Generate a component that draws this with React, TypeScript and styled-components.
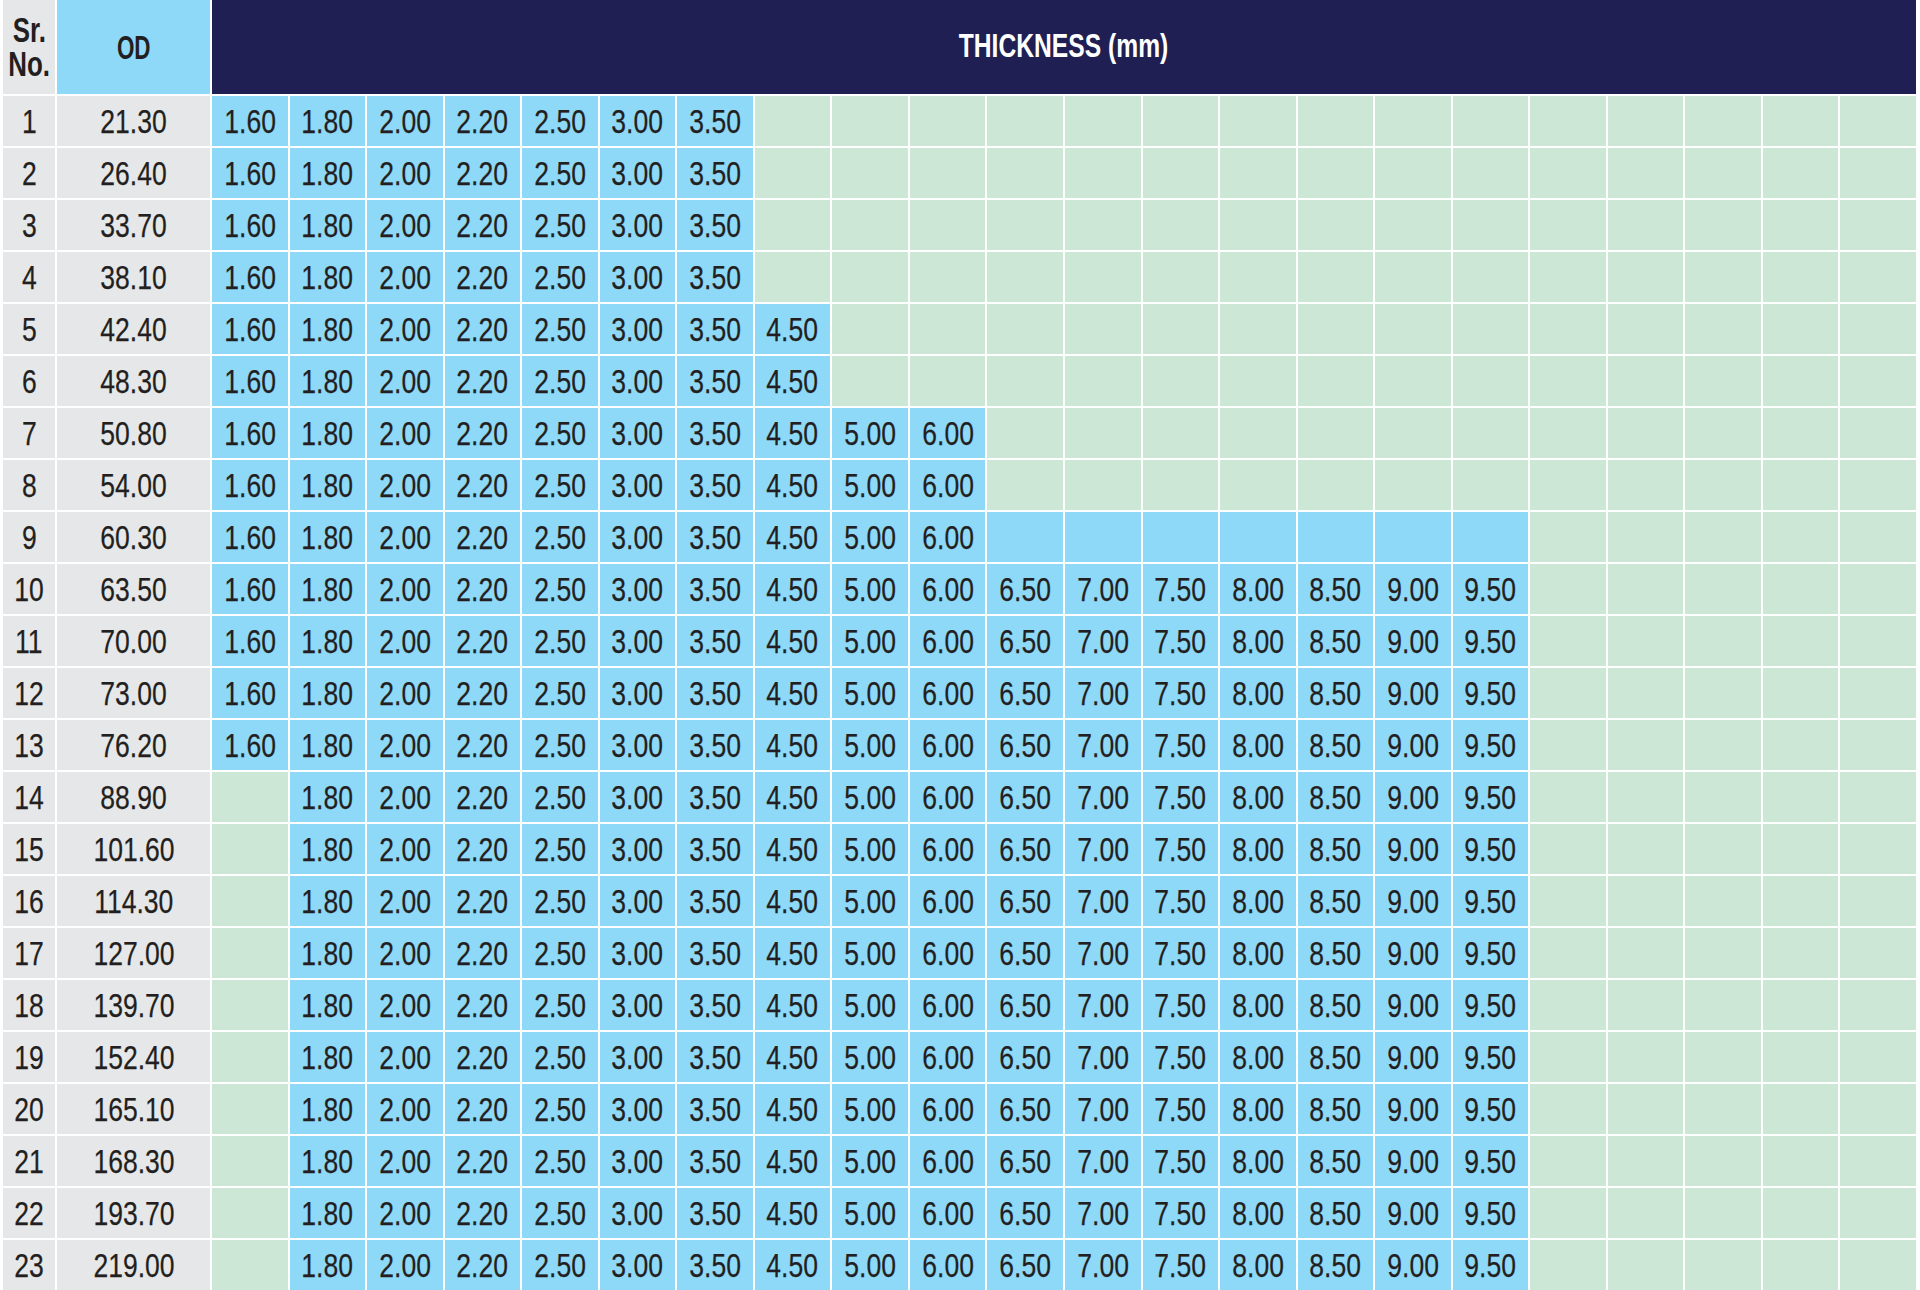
import React from "react";
import styled, { createGlobalStyle } from "styled-components";

const GlobalStyle = createGlobalStyle`
  html, body {
    margin: 0;
    padding: 0;
    background: #ffffff;
  }
  body {
    font-family: "Liberation Sans", Arial, sans-serif;
  }
`;

const FONT = `"Liberation Sans", Arial, sans-serif`;

const Table = styled.div`
  display: grid;
  grid-template-columns: 52px 153px repeat(22, 1fr);
  grid-template-rows: 94px repeat(23, 50px);
  gap: 2px;
  width: 1920px;
  box-sizing: border-box;
  padding: 0 4px 0 3px;
  background: #ffffff;
  font-family: ${FONT};
  color: #231f20;
`;

const HeadCell = styled.div<{ $tone: "grey" | "blue" | "navy"; $span?: number }>`
  display: flex;
  flex-direction: column;
  align-items: center;
  justify-content: center;
  text-align: center;
  font-weight: 700;
  grid-column: ${(p) => (p.$span ? `span ${p.$span}` : "auto")};
  background: ${(p) =>
    p.$tone === "grey" ? "#e6e7e8" : p.$tone === "blue" ? "#8ed8f8" : "#1f1f53"};
  color: ${(p) => (p.$tone === "navy" ? "#ffffff" : "#231f20")};
`;

/* condensed look: the reference uses a condensed grotesque */
const Condensed = styled.span<{ $size: number; $scale: number; $lh?: number; $shift?: number }>`
  display: block;
  font-size: ${(p) => p.$size}px;
  line-height: ${(p) => (p.$lh ? `${p.$lh}px` : 1)};
  transform: scaleX(${(p) => p.$scale});
  white-space: nowrap;
  margin-top: ${(p) => p.$shift ?? 0}px;
`;

const Cell = styled.div<{ $tone: "grey" | "blue" | "green" }>`
  display: flex;
  align-items: center;
  justify-content: center;
  background: ${(p) =>
    p.$tone === "grey" ? "#e6e7e8" : p.$tone === "blue" ? "#8ed8f8" : "#cce7d6"};
`;

const Num = styled.span`
  display: block;
  font-size: 34px;
  line-height: 1;
  white-space: nowrap;
  transform: scaleX(0.78);
  -webkit-text-stroke: 0.25px #231f20;
`;

const THICK = [
  "1.60", "1.80", "2.00", "2.20", "2.50", "3.00", "3.50", "4.50", "5.00",
  "6.00", "6.50", "7.00", "7.50", "8.00", "8.50", "9.00", "9.50",
];
const TOTAL_COLS = 22;

type RowSpec = {
  od: string;
  from: number; // first blue col
  to: number; // last col with a value
  blueTo: number; // last blue col
};

const ods = [
  "21.30", "26.40", "33.70", "38.10", "42.40", "48.30", "50.80", "54.00",
  "60.30", "63.50", "70.00", "73.00", "76.20", "88.90", "101.60", "114.30",
  "127.00", "139.70", "152.40", "165.10", "168.30", "193.70", "219.00",
];

const rows: RowSpec[] = ods.map((od, i) => {
  const n = i + 1;
  if (n <= 4) return { od, from: 0, to: 6, blueTo: 6 };
  if (n <= 6) return { od, from: 0, to: 7, blueTo: 7 };
  if (n <= 8) return { od, from: 0, to: 9, blueTo: 9 };
  if (n === 9) return { od, from: 0, to: 9, blueTo: 16 };
  if (n <= 13) return { od, from: 0, to: 16, blueTo: 16 };
  return { od, from: 1, to: 16, blueTo: 16 };
});

export default function App() {
  return (
    <>
      <GlobalStyle />
      <Table>
        <HeadCell $tone="grey">
          <Condensed $size={35} $lh={34} $scale={0.74} $shift={-1}>
            Sr.
          </Condensed>
          <Condensed $size={35} $lh={34} $scale={0.74}>
            No.
          </Condensed>
        </HeadCell>
        <HeadCell $tone="blue">
          <Condensed $size={33} $scale={0.68}>
            OD
          </Condensed>
        </HeadCell>
        <HeadCell $tone="navy" $span={TOTAL_COLS}>
          <Condensed $size={34} $scale={0.725} $shift={-4}>
            THICKNESS (mm)
          </Condensed>
        </HeadCell>
        {rows.map((r, i) => (
          <React.Fragment key={r.od}>
            <Cell $tone="grey">
              <Num>{i + 1}</Num>
            </Cell>
            <Cell $tone="grey">
              <Num>{r.od}</Num>
            </Cell>
            {Array.from({ length: TOTAL_COLS }, (_, c) => {
              const blue = c >= r.from && c <= r.blueTo;
              const val = c >= r.from && c <= r.to && c < THICK.length ? THICK[c] : "";
              return (
                <Cell key={c} $tone={blue ? "blue" : "green"}>
                  {val && <Num>{val}</Num>}
                </Cell>
              );
            })}
          </React.Fragment>
        ))}
      </Table>
    </>
  );
}
